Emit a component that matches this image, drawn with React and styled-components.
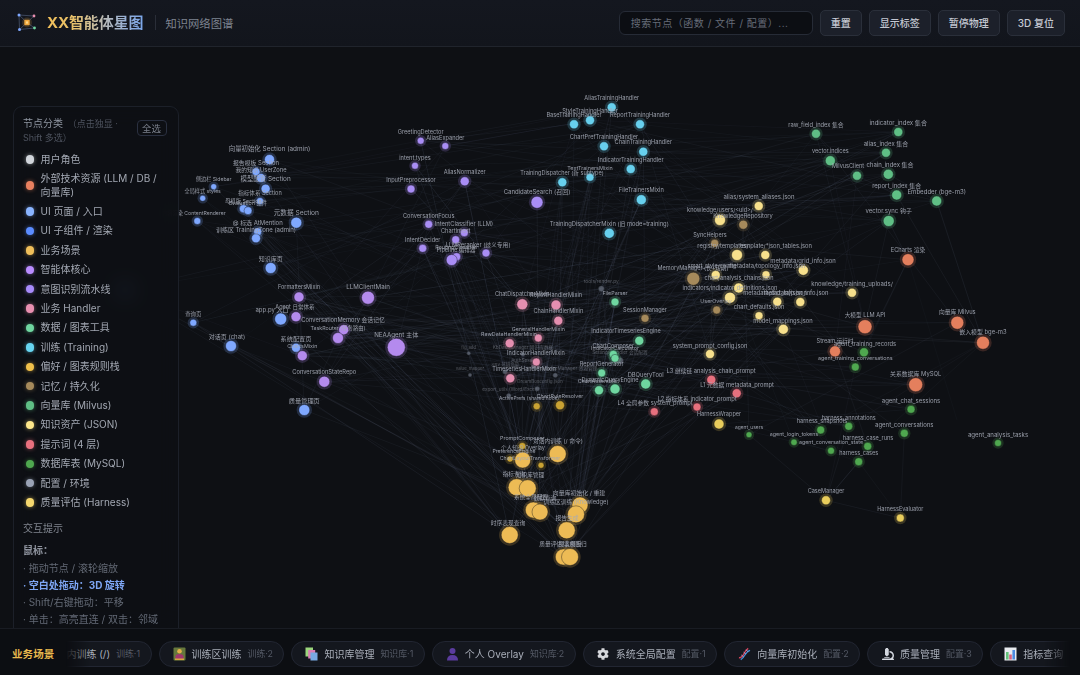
import React from "react";
import styled, { createGlobalStyle } from "styled-components";
import { FaCog, FaMicroscope } from "react-icons/fa";

const Global = createGlobalStyle`
  html, body { margin: 0; padding: 0; height: 100%; background: #0e1014; overflow: hidden; }
  #root { height: 100%; }
  * { box-sizing: border-box; }
  body { font-family: Inter, "Noto Sans CJK SC", sans-serif; }
`;

const Page = styled.div`
  height: 675px; width: 1080px; display: flex; flex-direction: column; background: #0e1014; color: #aab0bb;
`;
const Header = styled.header`
  height: 47px; flex: none; display: flex; align-items: center; padding: 0 15px 1px 17px;
  background: linear-gradient(180deg, #14171f, #12151c); border-bottom: 1px solid #20242c; position: relative; z-index: 3;
`;
const Brand = styled.div`display: flex; align-items: center; gap: 10px;`;
const Title = styled.h1`
  margin: 0; font-size: 15px; font-weight: 700; line-height: 20px; letter-spacing: -.1px;
  background: linear-gradient(90deg, #f0bf5a 0%, #e6c06a 28%, #b9bbbb 60%, #7aa6ea 100%);
  -webkit-background-clip: text; background-clip: text; color: transparent;
`;
const Divider = styled.span`width: 1px; height: 15px; background: #2a2e38; margin: 0 0 0 2px;`;
const Subtitle = styled.span`font-size: 11.3px; color: #7f8490; margin-left: -1px;`;
const Tools = styled.div`margin-left: auto; display: flex; align-items: center; gap: 7px;`;
const Search = styled.div`
  width: 194px; height: 24px; padding: 0 11px; display: flex; align-items: center; letter-spacing: .5px;
  background: #0c0e13; border: 1px solid #262b36; border-radius: 6px; font-size: 10px; color: #666c78; white-space: nowrap;
`;
const Btn = styled.button`
  height: 26px; padding: 0 10px; background: #1c202a; border: 1px solid #2a2f3a; border-radius: 5px;
  font: 500 10px Inter, "Noto Sans CJK SC", sans-serif; color: #c4c8d2;
`;

const Main = styled.main`flex: 1; position: relative; overflow: hidden; min-height: 0;`;
const GraphSvg = styled.svg`position: absolute; inset: 0; width: 100%; height: 100%; display: block;`;
const Edge = styled.line`stroke: #8d9cc0; stroke-opacity: ${p => p.$o}; stroke-width: .6;`;
const Halo = styled.circle`fill: ${p => p.$c}; opacity: .2;`;
const Dot = styled.circle`fill: ${p => p.$c}; stroke: #0e1014; stroke-opacity: .55; stroke-width: .7; opacity: ${p => p.$o};`;
const Label = styled.text`
  fill: #a5aab6; text-anchor: middle; dominant-baseline: central; font-family: Inter, "Noto Sans CJK SC", sans-serif;
  font-size: ${p => p.$s}px; opacity: ${p => p.$o};
`;

const Panel = styled.aside`
  position: absolute; left: 12.5px; top: 59px; width: 166px; height: 560px; padding: 10px 11px 0 9.5px;
  background: rgba(13, 15, 20, .9); backdrop-filter: blur(10px);
  border: 1px solid #1c2029; border-radius: 9px; z-index: 2;
`;
const PanelHead = styled.div`display: flex; justify-content: space-between; align-items: flex-start; gap: 6px; margin-bottom: 6px;`;
const PanelTitle = styled.div`font-size: 10px; line-height: 13.5px; color: #9096a2; width: 110px;`;
const Muted = styled.span`font-size: 9px; color: #4e535f; margin-left: 2px;`;
const AllBtn = styled.button`
  flex: none; width: 30px; height: 16px; padding: 0; margin-top: 3px; background: transparent; border: 1px solid #2a3040; border-radius: 4px;
  font: 9.4px Inter, "Noto Sans CJK SC", sans-serif; color: #7b808c;
`;
const Legend = styled.ul`list-style: none; margin: 0 0 0 2.5px; padding: 0; display: flex; flex-direction: column;`;
const LegendRow = styled.li`
  display: flex; align-items: center; gap: 6.5px; padding: 3px 0; min-height: 19.4px; font-size: 10px; line-height: 13.3px; color: #a3a8b3;
`;
const Swatch = styled.span`
  flex: none; width: 8.5px; height: 8.5px; border-radius: 50%; background: ${p => p.$c}; box-shadow: 0 0 4px ${p => p.$c}99;
`;
const Section = styled.div`font-size: 10px; color: #80858f; margin: 10px 0 7px; line-height: 13px;`;
const Hint = styled.div`
  font-size: 10px; line-height: 17.3px; white-space: nowrap; color: ${p => p.$hl ? "#7ea6f5" : p.$b ? "#8e939e" : "#636975"};
  font-weight: ${p => (p.$hl || p.$b) ? 700 : 400};
`;

const Footer = styled.footer`
  height: 47px; flex: none; display: flex; align-items: center; padding: 3px 10px 0 12px; gap: 8px;
  background: #0c0e12; border-top: 1px solid #191c23; position: relative; z-index: 3;
`;
const FootLabel = styled.span`flex: none; font-size: 10.5px; font-weight: 700; color: #e8b84e; letter-spacing: .1px;`;
const Scroller = styled.div`
  flex: 1; min-width: 0; overflow: hidden;
  mask-image: linear-gradient(90deg, transparent 0, transparent 4px, #000 28px, #000 calc(100% - 26px), transparent 100%);
`;
const Track = styled.div`display: flex; gap: 7px; margin-left: ${p => p.$offset}px; width: max-content;`;
const Pill = styled.div`
  height: 26px; flex: none; display: flex; align-items: center; gap: 6px; padding: 0 10.5px 0 13px; border-radius: 13px;
  background: #14171e; border: 1px solid #222632; white-space: nowrap;
`;
const PillName = styled.span`font-size: 10px; color: #a9aeb9;`;
const PillSub = styled.span`font-size: 8.9px; color: #555a66;`;
const IconBox = styled.span`flex: none; width: 13px; height: 14px; display: flex; align-items: center; justify-content: center;`;

const LEGEND = [
  ["#d1d5db", "用户角色"], ["#e8805f", "外部技术资源 (LLM / DB / 向量库)"], ["#8ab4ff", "UI 页面 / 入口"], ["#5b8cff", "UI 子组件 / 渲染"],
  ["#f0bf5a", "业务场景"], ["#b98cff", "智能体核心"], ["#a78bfa", "意图识别流水线"], ["#e88fb0", "业务 Handler"],
  ["#6fd6a0", "数据 / 图表工具"], ["#67d4f0", "训练 (Training)"], ["#f0c04a", "偏好 / 图表规则栈"], ["#a68a5b", "记忆 / 持久化"],
  ["#5fbf85", "向量库 (Milvus)"], ["#fde68a", "知识资产 (JSON)"], ["#e8707e", "提示词 (4 层)"], ["#4fa84f", "数据库表 (MySQL)"],
  ["#9aa3b5", "配置 / 环境"], ["#f5d76e", "质量评估 (Harness)"],
];

// [x, y, r, label, labelY, size, labelX]
const GROUPS = {
  ui: ["#7fa8ff", [
    [269.5,159.5,5,"向量初始化 Section (admin)",149.3,6], [256,171.7,4,"报告模板 Section",162.7,5.5], [261,178,4.5,"我的知识 UserZone",169,5.4],
    [265.6,188.7,4.5,"模型配置 Section",179.3,6], [213.7,186.7,3,"侧边栏 Sidebar",179,4.8], [202.7,198.3,3,"全局样式 styles",190.7,4.8],
    [260,201,3.5,"指标体系 Section",193,5.2], [243.3,208.7,4,"母模版 Section",200.7,5], [248,210.7,4,"Evaluation 组件",202.7,5],
    [197.3,221,3.5,"内容渲染 ContentRenderer",213,4.8,194], [296.3,222.7,5.5,"元数据 Section",212.7,6.2], [257.7,231.7,4,"@ 标选 AtMention",222.7,5.6],
    [256,238.3,4.5,"训练区 TrainingZone (admin)",229.3,5.6,256], [270.7,268,5.5,"知识库页",258.3,5.6], [280.7,319,6,"app.py 入口",309,5.6,272],
    [193.3,322.7,3.5,"查询页",314,5], [231,346,5.5,"对话页 (chat)",336,5.6,227], [296,347.7,4.5,"系统配置页",338.3,5.8], [304.3,410,5.5,"质量管理页",400,5.8],
    [125,290,7,"",0,0],
  ]],
  core: ["#b48aee", [
    [299,297,5,"FormattersMixin",287,5.2], [296,316.7,5,"Agent 日常体系",307,5.2,295], [343.7,329.7,5,"ConversationMemory 会话记忆",319.3,5.4,343],
    [338,338,5.5,"TaskRouter (任务路由)",328,5,338], [302.3,355.7,5,"ChartsMixin",346,5], [324.3,381.7,5.5,"ConversationStateRepo",371.7,5.4],
    [368,297.7,6.5,"LLMClientMain",286.3,5.8], [396.3,347.3,9,"NEAAgent 主体",334,5.8],
  ]],
  intent: ["#a98df5", [
    [420.7,140.7,3.5,"GreetingDetector",132.3,5.3], [445.3,146,3.5,"AliasExpander",137.7,5.3], [415,165.7,3.5,"intent.types",157.7,5.3],
    [464.7,181.3,4.5,"AliasNormalizer",172.3,5.3], [411,189,4,"InputPreprocessor",180.3,5.3], [428.7,224.3,4,"ConversationFocus",215.7,5.3],
    [464.3,232.7,4,"IntentClassifier (LLM)",223.7,5.4,464], [455.7,239.7,4,"ChartIntent",230.7,5.2], [422.7,248.3,4,"IntentDecider",239.7,5.2],
    [456.7,256.7,4,"RoutingClassifier",246.7,5], [451.7,260,5.5,"Pipeline 编排器",250,5.2,456], [486,253,4,"LLMReranker (歧义专用)",244,5.4,478],
    [537,202.3,6,"CandidateSearch (召回)",191,5.6],
  ]],
  training: ["#67d0ee", [
    [611.7,107.3,4.5,"AliasTrainingHandler",98,5.3], [590,120.3,4.5,"StyleTrainingHandler",111,5.3], [574,124.3,4.5,"BaseTrainingHandler",115,5.3],
    [640,124.3,4.5,"ReportTrainingHandler",115,5.3], [604,146.3,4.5,"ChartPrefTrainingHandler",137,5.3], [643.3,151.7,4.5,"ChainTrainingHandler",142.3,5.3],
    [630.7,169,4.5,"IndicatorTrainingHandler",160,5.3], [590,177.3,4,"TextTrainersMixin",168,5.1], [562.3,182.3,4.5,"TrainingDispatcher (新 subtype)",173,5.2,562],
    [641.3,199.7,5,"FileTrainersMixin",189.7,5.3], [609.3,233.3,5,"TrainingDispatcherMixin (旧 mode=training)",223.7,5.4],
  ]],
  handler: ["#e58fb0", [
    [522.3,304.3,5.5,"ChatDispatcherMixin",293.7,5.2], [556,305,5,"ReportHandlerMixin",295.3,5.2], [558.3,320.7,4.5,"ChainHandlerMixin",311.3,5.2],
    [538.3,338,4,"GeneralHandlerMixin",329,5], [509.7,343.3,4.5,"RawDataHandlerMixin",334,5,509], [536.3,362,4,"IndicatorHandlerMixin",352.7,5.2,536],
    [510.3,378.3,4.5,"TimeseriesHandlerMixin",368.7,5.2,524],
  ]],
  data: ["#6fd6a0", [
    [615,302,4,"FileParser",293,5], [639.3,340.7,4.5,"IndicatorTimeseriesEngine",331.3,5.2,626], [613.3,354.3,4,"ChartComposer",345.7,5.2],
    [615,358.3,4,"IndicatorCalculator",348,5], [601.7,373,4,"ReportGenerator",364,5.2], [615,389,5,"DynamicQueryEngine",379.7,5.2,610],
    [645.7,384,5,"DBQueryTool",374.7,5.4], [599,390.3,4.5,"ChartAssembler",381,5,598],
  ]],
  memory: ["#a68a5b", [
    [743.3,224.7,4.5,"KnowledgeRepository",215.3,5.4,743], [714.7,243.3,4,"SyncHelpers",234.7,5.2,710], [693.3,278.7,6.5,"MemoryManager (长+短期)",268,5.2,693],
    [645,318.3,4,"SessionManager",309.7,5.2], [716.7,310,4,"UserOverlay",301,5,716],
  ]],
  json: ["#f7e08c", [
    [758.7,206,4.5,"alias/system_aliases.json",196,5.6,759], [720,220,5.5,"knowledge/users/<uid>/",209.7,5.3,720], [737,255,5.5,"registry/templates/",245,5.4,723],
    [765.3,255,4.5,"template/*json_tables.json",245,5.4,776], [766,274.7,4,"metadata/topology_info.json",265.7,5.4,767], [715.7,275,4.5,"smart_style/config",265.7,5.2,712],
    [803.3,270.3,5,"metadata/grid_info.json",260.3,5.5,803], [738.7,288,5,"chart/analysis_chains.json",278,5.2,739], [730,297.7,5.5,"indicators/indicator_definitions.json",287.7,5.3,730],
    [777.3,301.7,4.5,"metadata/dict_info.json",292.7,5.4,775], [800.3,302,4.5,"metadata/json_info.json",292.5,5.4,796], [852,292.7,4.5,"knowledge/training_uploads/",283,5.6],
    [759,315.7,4,"chart_defaults.json",307,5.3,759], [783.3,329.3,5,"model_mappings.json",320,5.4,783], [710,354,4.5,"system_prompt_config.json",345,5.4,710],
  ]],
  prompt: ["#e8707e", [
    [711.3,379.7,4.5,"L3 继续链 analysis_chain_prompt",370.3,5.4,711], [736.7,393.3,4.5,"L1 元数据 metadata_prompt",384.3,5.4,737],
    [697,407,4,"L2 指标体系 indicator_prompt",398,5.4,697], [654.3,411.7,4,"L4 全局参数 system_prompt",402.7,5.4,655],
  ]],
  harness: ["#e9cd5c", [
    [719,424,5,"HarnessWrapper",414.3,5.2], [826,500.3,4.5,"CaseManager",491,5.2], [900.3,518,4,"HarnessEvaluator",509.3,5.2],
  ]],
  milvus: ["#5fbf85", [
    [816,133.7,4.5,"raw_field_index 集合",124.7,5.4], [898.3,132,4.5,"indicator_index 集合",122.3,5.7], [886,152.7,4.5,"alias_index 集合",143.3,5.6],
    [830.3,160.7,5,"vector.indices",151,5.2], [857,175.7,4.5,"MilvusClient",166.3,5.2,848], [888.3,174.3,5,"chain_index 集合",164.7,5.6,890],
    [896.7,195,5,"report_index 集合",185.3,5.6], [936.7,201,5,"Embedder (bge-m3)",191.3,5.7], [888.7,221,5.5,"vector.sync 钩子",210.7,5.6],
  ]],
  external: ["#e47f5d", [
    [908,259.7,6,"ECharts 渲染",249.3,5.4], [865,326.7,7,"大模型 LLM API",315.3,5.3], [957.3,322.7,6.5,"向量库 Milvus",311.3,5.4],
    [983,342.7,6.5,"嵌入模型 bge-m3",331.7,5.5], [835,351.3,5.5,"Stream 运行时",341,5.2], [915.7,384.7,7,"关系数据库 MySQL",373,5.5],
  ]],
  mysql: ["#4fa84f", [
    [864,352.3,4.5,"agent_training_records",343.3,5.4,865], [855.3,367,4,"agent_training_conversations",358,5.1], [911,409.3,4,"agent_chat_sessions",400.7,5.6],
    [848.7,426.3,4,"harness_annotations",417.7,5.2], [820.7,430,4,"harness_snapshots",421.3,5.2,822], [904.3,433.3,4,"agent_conversations",424.7,5.6],
    [749,434.7,3,"agent_users",427,4.6], [794,442.3,3.2,"agent_login_tokens",434.3,5,794], [867.7,446.3,4,"harness_case_runs",437.7,5.2,868],
    [831,450.7,3.5,"agent_conversation_state",442.3,5,831], [858.7,461.7,4,"harness_cases",453,5.2], [998,443,3.5,"agent_analysis_tasks",434.7,5.7],
  ]],
  rules: ["#c9a233", [
    [536.7,406.3,3.5,"ActivePrefs (shared hook)",398,4.6,529], [560,405.3,4.5,"ChartRuleResolver",396,5],
    [522.3,446,3.5,"PromptComposer",438,5], [510,459,3,"PreferenceEngine",451.3,4.8,514], [541,465.3,3,"ChartLayoutTransformer",457.7,4.9,530],
  ]],
  scene: ["#edbb55", [
    [557.7,454,8.5,"对话内训练 (/ 命令)",440.7,5.4,558], [522.7,460,8,"个人知识 Overlay",448,5.2,523], [516.7,487.3,8.5,"指标查询",474,5.3,514],
    [527.7,488.3,8.5,"知识库管理",475,5.3,530], [533.3,510,8,"系统全局配置",496.7,5.3,531], [540,512,8,"数据查询",498,5.3,545],
    [580,505,8,"向量库初始化 / 重建",492,5.5,579], [576,514.3,8.5,"训练区训练 (Knowledge)",501,5.4,576], [566.7,530.3,8.5,"报告生成",517,5.4,567],
    [509.7,535,8.5,"时序表现查询",522.3,5.4,508], [563.3,557,8,"质量评估/案例回归",544,5.3,563], [570,557,8.5,"图表模板",544,5.3,570],
  ]],
};
const DIM = [
  [601.3,288.7,3,"tools/render.py",280.7,4.6], [468.7,353.3,2,"fig_add",347,4], [470,375,2,"value_mapper",368,4], [505,371.7,2.5,".env 环境变量",364,4.2],
  [508.7,395.7,2.5,"export_utils (Word/Excel)",389,4.4,510], [555.3,375.3,2.5,"ResourceManager 资源管理",368,4.4,567], [537.3,388.7,2.5,"DreamBoxconfig.json",381,4.2,540],
  [523,354.3,2.2,"KbDataManager 知识库数据",347,4.4], [533,367,2.2,"AuthSession",360,4.4,525], [620,360.7,3.5,"SettingsHandler 会话配置",352,4.4],
];
const LABEL_SCALE = 1.07;

const all = Object.entries(GROUPS).flatMap(([g, [c, list]]) => list.map(n => ({ g, c, n })));
const EDGES = (() => {
  let s = 20240611;
  const rnd = () => (s = (s * 1664525 + 1013904223) >>> 0) / 4294967296;
  const pts = [...all.map(a => ({ g: a.g, x: a.n[0], y: a.n[1] })), ...DIM.map(n => ({ g: "dim", x: n[0], y: n[1] }))]
    .filter(p => !(p.x === 998 && p.y === 443));
  const ofG = g => pts.filter(p => g.includes(p.g));
  const res = [];
  const link = (from, to, k, o) => from.forEach(a => {
    for (let i = 0; i < k; i++) {
      const b = to[Math.floor(rnd() * to.length)];
      if (a !== b) res.push([a.x, a.y, b.x, b.y, o * (.7 + rnd() * .6)]);
    }
  });
  link(ofG(["scene"]), ofG(["core","handler","json","data","training","ui","prompt","memory","intent"]), 9, .11);
  link(ofG(["core"]), ofG(["handler","intent","data","memory","prompt","json","external"]), 6, .11);
  link(ofG(["handler"]), ofG(["json","prompt","data","memory","dim","external","milvus","rules"]), 6, .11);
  link(ofG(["data"]), ofG(["json","external","dim","mysql","scene"]), 4, .1);
  link(ofG(["ui"]), ofG(["core","intent","scene","milvus","training","handler"]), 3, .08);
  link(ofG(["intent"]), ofG(["json","milvus","training","handler","memory"]), 3, .09);
  link(ofG(["training"]), ofG(["milvus","json","handler","memory","intent"]), 3, .09);
  link(ofG(["milvus"]), ofG(["json","external","training","milvus"]), 3, .1);
  link(ofG(["memory"]), ofG(["json","mysql","external"]), 4, .1);
  link(ofG(["mysql"]), ofG(["harness","external","memory"]), 2, .09);
  link(ofG(["dim"]), ofG(["handler","scene","core","json"]), 3, .09);
  res.push([936.7,201,983,342.7,.16],[888.7,221,908,259.7,.12],[826,500.3,858.7,461.7,.22],[900.3,518,826,500.3,.12],[908,259.7,957,420,.06]);
  return res;
})();

const GraphContent = () => (
  <>
    {EDGES.map((e, i) => <Edge key={i} x1={e[0]} y1={e[1]} x2={e[2]} y2={e[3]} $o={e[4]} />)}
    {DIM.map((n, i) => (
      <g key={"d" + i}>
        <Dot cx={n[0]} cy={n[1]} r={n[2]} $c="#6b7280" $o={.7} />
        <Label x={n[6] ?? n[0]} y={n[4]} $s={n[5] * LABEL_SCALE} $o={.45}>{n[3]}</Label>
      </g>
    ))}
    {all.map(({ c, n }, i) => (
      <g key={i}>
        <Halo cx={n[0]} cy={n[1]} r={n[2] + 2.2} $c={c} />
        <Dot cx={n[0]} cy={n[1]} r={n[2]} $c={c} $o={1} />
      </g>
    ))}
    {all.filter(a => a.n[3]).map(({ n }, i) => (
      <Label key={i} x={n[6] ?? n[0]} y={n[4]} $s={n[5] * LABEL_SCALE} $o={.92}>{n[3]}</Label>
    ))}
  </>
);

const Logo = () => (
  <svg width="20" height="20" viewBox="0 0 20 20">
    <g stroke="#46526a" strokeWidth=".8"><path d="M2 2 10 9.5 M17 3 10 9.5 M2.5 16.5 10 9.5 M17.5 15 10 9.5 M2 2 17 3 M2 2 2.5 16.5 M2.5 16.5 17.5 15" /></g>
    <circle cx="10" cy="9.5" r="5" fill="#f0a63c" opacity=".18" />
    <rect x="7.3" y="6.8" width="5.4" height="5.4" rx="1" fill="#f0a63c" />
    <rect x="8.9" y="8.4" width="2.2" height="2.2" fill="#ffd98a" />
    <circle cx="2" cy="2" r="1.5" fill="#7fa8ff" /><circle cx="17" cy="3" r="1.4" fill="#e88fb0" />
    <circle cx="2.5" cy="16.5" r="1.5" fill="#7fa8ff" /><circle cx="17.5" cy="15" r="1.4" fill="#6fd6a0" />
  </svg>
);
const IconTrainer = () => (
  <svg width="13" height="14" viewBox="0 0 13 14">
    <rect x=".5" y=".5" width="12" height="13" rx="1" fill="#66783c" />
    <circle cx="6.5" cy="4.2" r="2.3" fill="#e3b04a" /><path d="M2.5 12V9.5Q2.5 7 6.5 7t4 2.5V12Z" fill="#a2386e" /><rect x="2" y="11.5" width="9" height="1.6" fill="#d8a63e" />
  </svg>
);
const IconFiles = () => (
  <svg width="13" height="14" viewBox="0 0 13 14">
    <rect x=".5" y=".5" width="7.5" height="9" fill="#9bd67c" /><rect x="3.2" y="3" width="7" height="8.5" fill="#d97fb5" /><rect x="5.5" y="5.5" width="7" height="8" fill="#78a9e2" />
  </svg>
);
const IconUser = () => (
  <svg width="13" height="14" viewBox="0 0 13 14"><circle cx="6.5" cy="4" r="3" fill="#5b3c9e" /><path d="M1 13.5Q1 8 6.5 8T12 13.5Z" fill="#5b3c9e" /></svg>
);
const IconDna = () => (
  <svg width="14" height="14" viewBox="0 0 14 14" fill="none" strokeWidth="1.4">
    <path d="M1 11C6 12 6 4 11 1" stroke="#d1435b" /><path d="M3 13.2C8 10 8 4 13 3" stroke="#3f8fd8" />
    <path d="M3.5 8 6 10M6 5 8.5 7M8.5 2.5 11 4.5" stroke="#c9b6e0" strokeWidth=".8" />
  </svg>
);
const IconChart = () => (
  <svg width="13" height="14" viewBox="0 0 13 14">
    <rect x=".5" y=".5" width="12" height="13" fill="#e8ebf0" /><rect x="2" y="5" width="2.6" height="7.5" fill="#63c27b" /><rect x="5.2" y="7.5" width="2.6" height="5" fill="#d9607e" /><rect x="8.4" y="3" width="2.6" height="9.5" fill="#4c8be0" />
  </svg>
);

const PILLS = [
  [null, "对话内训练 (/)", "训练·1"],
  [<IconTrainer />, "训练区训练", "训练·2"],
  [<IconFiles />, "知识库管理", "知识库·1"],
  [<IconUser />, "个人 Overlay", "知识库·2"],
  [<FaCog size={12} color="#d6d8dc" />, "系统全局配置", "配置·1"],
  [<IconDna />, "向量库初始化", "配置·2"],
  [<FaMicroscope size={12} color="#d4d8e0" />, "质量管理", "配置·3"],
  [<IconChart />, "指标查询", "指标·1"],
];

export default function App() {
  return (
    <Page>
      <Global />
      <Header>
        <Brand>
          <Logo />
          <Title>XX智能体星图</Title>
          <Divider />
          <Subtitle>知识网络图谱</Subtitle>
        </Brand>
        <Tools>
          <Search>搜索节点（函数 / 文件 / 配置）...</Search>
          <Btn>重置</Btn>
          <Btn>显示标签</Btn>
          <Btn>暂停物理</Btn>
          <Btn>3D 复位</Btn>
        </Tools>
      </Header>
      <Main>
        <GraphSvg viewBox="0 47 1080 581" preserveAspectRatio="none"><GraphContent /></GraphSvg>
        <Panel>
          <PanelHead>
            <PanelTitle>节点分类 <Muted>（点击独显 · Shift 多选）</Muted></PanelTitle>
            <AllBtn>全选</AllBtn>
          </PanelHead>
          <Legend>
            {LEGEND.map(([c, t]) => <LegendRow key={t}><Swatch $c={c} />{t}</LegendRow>)}
          </Legend>
          <Section>交互提示</Section>
          <Hint $b>鼠标：</Hint>
          <Hint>· 拖动节点 / 滚轮缩放</Hint>
          <Hint $hl>· 空白处拖动：3D 旋转</Hint>
          <Hint>· Shift/右键拖动：平移</Hint>
          <Hint>· 单击：高亮直连 / 双击：邻域</Hint>
        </Panel>
      </Main>
      <Footer>
        <FootLabel>业务场景</FootLabel>
        <Scroller>
          <Track $offset={-30}>
            {PILLS.map(([icon, name, sub]) => (
              <Pill key={name}>
                {icon && <IconBox>{icon}</IconBox>}
                <PillName>{name}</PillName>
                <PillSub>{sub}</PillSub>
              </Pill>
            ))}
          </Track>
        </Scroller>
      </Footer>
    </Page>
  );
}
